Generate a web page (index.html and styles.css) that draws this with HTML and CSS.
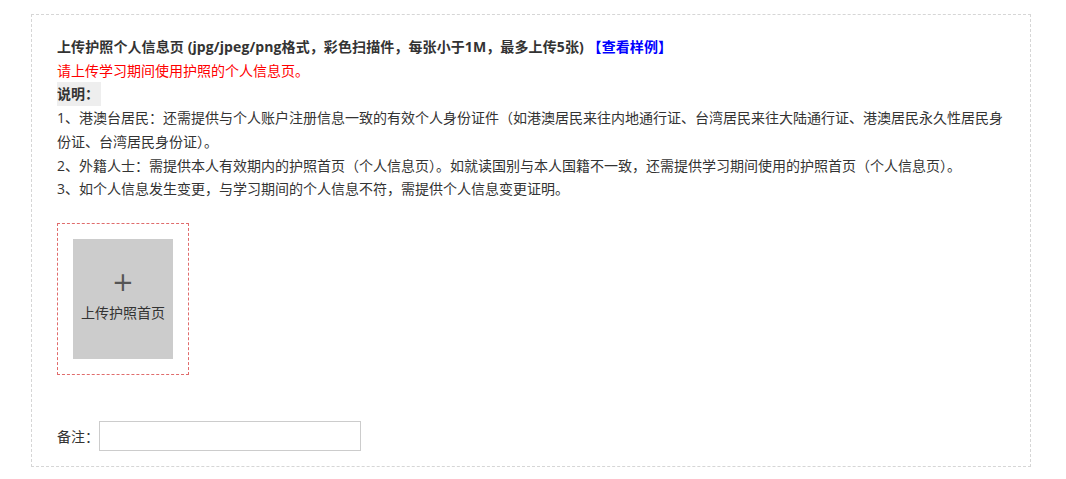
FILE: index.html
```html
<!DOCTYPE html>
<html lang="zh-CN">
<head>
<meta charset="utf-8">
<title>上传护照个人信息页</title>
<link rel="stylesheet" href="styles.css">
</head>
<body>
<div class="page">
  <div class="panel">
    <div class="info">
      <p class="title">上传护照个人信息页 (jpg/jpeg/png格式，彩色扫描件，每张小于1M，最多上传5张) <a class="sample" href="#">【查看样例】</a></p>
      <p class="warn">请上传学习期间使用护照的个人信息页。</p>
      <p><span class="note-label">说明：</span></p>
      <p>1、港澳台居民：还需提供与个人账户注册信息一致的有效个人身份证件（如港澳居民来往内地通行证、台湾居民来往大陆通行证、港澳居民永久性居民身份证、台湾居民身份证）。</p>
      <p>2、外籍人士：需提供本人有效期内的护照首页（个人信息页）。如就读国别与本人国籍不一致，还需提供学习期间使用的护照首页（个人信息页）。</p>
      <p>3、如个人信息发生变更，与学习期间的个人信息不符，需提供个人信息变更证明。</p>
    </div>
    <div class="upload-frame">
      <div class="upload-tile">
        <span class="plus">+</span>
        <span class="upload-text">上传护照首页</span>
      </div>
    </div>
    <div class="remark">
      <label class="remark-label" for="remark">备注：</label>
      <input class="remark-input" id="remark" type="text">
    </div>
  </div>
</div>
</body>
</html>
```
FILE: styles.css
```css
html, body {
  margin: 0;
  padding: 0;
  background: #fff;
}
body {
  font-family: "Open Sans", "Noto Sans CJK SC", sans-serif;
  font-size: 14px;
  color: #333;
}
.page {
  padding: 14px 0 0 31px;
}
.panel {
  width: 1000px;
  box-sizing: border-box;
  border: 1px dashed #d6d6d6;
  padding: 20px 25px 15px 25px;
}
.info p {
  margin: 0;
  line-height: 23.7px;
}
.title {
  font-weight: bold;
  letter-spacing: 0.1px;
}
.sample {
  color: #0000ff;
  text-decoration: none;
  font-weight: bold;
}
.warn {
  color: #ff0000;
}
.note-label {
  font-weight: bold;
  background: #eeeeee;
  display: inline-block;
  padding-right: 2px;
}
.upload-frame {
  margin-top: 22px;
  width: 132px;
  height: 152px;
  box-sizing: border-box;
  border: 1px dashed #e06c6c;
  padding: 15px;
}
.upload-tile {
  width: 100px;
  height: 120px;
  background: #cccccc;
  display: flex;
  flex-direction: column;
  align-items: center;
}
.plus {
  margin-top: 27px;
  font-family: "DejaVu Sans", sans-serif;
  font-size: 26px;
  line-height: 32px;
  font-weight: 400;
  color: #555;
}
.upload-text {
  margin-top: 6px;
  font-size: 14px;
  line-height: 18px;
  color: #333;
}
.remark {
  margin-top: 46px;
  display: flex;
  align-items: center;
}
.remark-label {
  font-size: 14px;
  color: #333;
}
.remark-input {
  margin: 0;
  width: 262px;
  height: 30px;
  box-sizing: border-box;
  border: 1px solid #cccccc;
  padding: 0 6px;
  outline: none;
  font-size: 14px;
}
```
